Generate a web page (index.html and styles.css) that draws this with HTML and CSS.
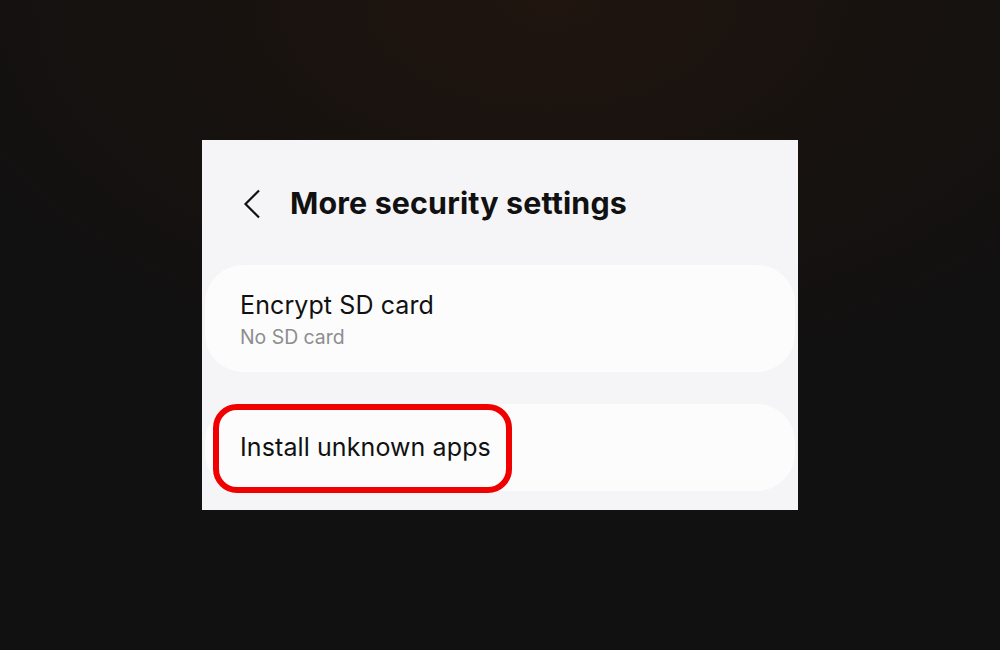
FILE: index.html
```html
<!DOCTYPE html>
<html lang="en">
  <head>
    <meta charset="UTF-8" />
    <title>More security settings</title>
    <link rel="stylesheet" href="styles.css">
  </head>
  <body>
    <div class="screen">
      <div class="header">
        <svg class="back" width="18" height="30" viewBox="0 0 18 30">
          <path d="M16 1.5 L2.5 15 L16 28.5" fill="none" stroke="#111" stroke-width="2.2" />
        </svg>
        <h1>More security settings</h1>
      </div>

      <div class="card">
        <div class="title">Encrypt SD card</div>
        <div class="sub">No SD card</div>
      </div>

      <div class="card card-short">
        <div class="title">Install unknown apps</div>
        <div class="highlight"></div>
      </div>
    </div>
  </body>
</html>
```

FILE: styles.css
```css
/* Global Styles */
body {
  margin: 0;
  height: 650px;
  display: flex;
  justify-content: center;
  align-items: flex-start;
  background: radial-gradient(ellipse 650px 380px at 55% 0%, #20150f 0%, #17120f 55%, #121111 100%);
  background-color: #121111;
  font-family: Inter, Roboto, sans-serif;
}

/* Phone screenshot */
.screen {
  margin-top: 140px;
  width: 596px;
  height: 370px;
  background-color: #f5f5f7;
  box-sizing: border-box;
  padding: 0 3px;
  overflow: hidden;
}

.header {
  display: flex;
  align-items: center;
  height: 125px;
  padding-left: 38px;
}

.back {
  display: block;
  margin-top: 2px;
}

.header h1 {
  margin: 0 0 0 29px;
  font-size: 30.4px;
  font-weight: 700;
  color: #111;
  letter-spacing: 0.15px;
}

.card {
  position: relative;
  background-color: #fcfcfd;
  border-radius: 38px;
  height: 107px;
  box-sizing: border-box;
  padding: 24px 0 0 35px;
}

.card .title {
  font-size: 25px;
  color: #111;
  line-height: 32px;
  letter-spacing: 0.1px;
}

.card .sub {
  font-size: 19.4px;
  color: #8d8d8f;
  margin-top: 4px;
}

.card-short {
  margin-top: 32px;
  height: 87px;
  padding-top: 27px;
}

/* red marker round the item */
.highlight {
  position: absolute;
  left: 8px;
  top: 0;
  width: 299px;
  height: 89px;
  border: 6px solid #f00000;
  border-radius: 24px;
  box-sizing: border-box;
}
```
